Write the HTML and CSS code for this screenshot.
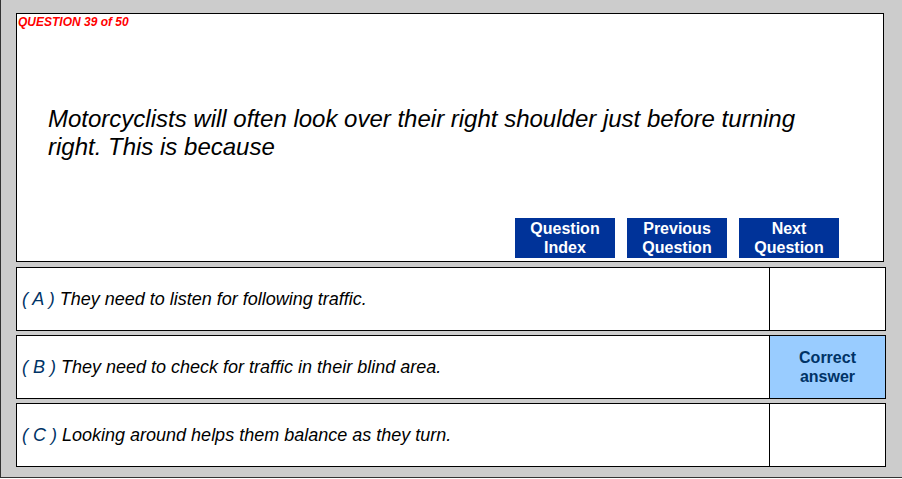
FILE: index.html
```html
<!DOCTYPE html>
<html lang="en">
<head>
  <meta charset="utf-8">
  <title>Question 39 of 50</title>
  <link rel="stylesheet" href="styles.css">
</head>
<body>
  <div class="frame">
    <div class="question">
      <div class="counter">QUESTION 39 of 50</div>
      <p class="prompt">Motorcyclists will often look over their right shoulder just before turning right. This is because</p>
      <div class="nav">
        <a class="btn" href="#">Question<br>Index</a>
        <a class="btn" href="#">Previous<br>Question</a>
        <a class="btn" href="#">Next<br>Question</a>
      </div>
    </div>
    <div class="answers">
      <div class="answer">
        <div class="choice"><span class="letter">( A )</span> They need to listen for following traffic.</div>
        <div class="mark"></div>
      </div>
      <div class="answer">
        <div class="choice"><span class="letter">( B )</span> They need to check for traffic in their blind area.</div>
        <div class="mark correct">Correct<br>answer</div>
      </div>
      <div class="answer">
        <div class="choice"><span class="letter">( C )</span> Looking around helps them balance as they turn.</div>
        <div class="mark"></div>
      </div>
    </div>
  </div>
</body>
</html>
```
FILE: styles.css
```css
body {
  margin: 0;
  background: #fff;
  font-family: "Liberation Sans", Arial, sans-serif;
}
.frame {
  width: 886px;
  height: 464px;
  background: #cccccc;
  border-left: 1px solid #333;
  border-bottom: 1px solid #333;
  padding: 13px 0 0 15px;
}
.question {
  width: 866px;
  height: 247px;
  background: #fff;
  border: 1px solid #000;
  display: flex;
  flex-direction: column;
}
.counter {
  color: #ff0000;
  font-size: 12px;
  font-weight: bold;
  font-style: italic;
  padding: 1px 0 0 1px;
  line-height: 14px;
}
.prompt {
  margin: 76px 0 0 31px;
  font-size: 24px;
  font-style: italic;
  line-height: 28px;
  width: 780px;
}
.nav {
  margin-top: auto;
  margin-bottom: 3px;
  display: flex;
  justify-content: flex-end;
  gap: 12px;
  padding-right: 44px;
}
.btn {
  width: 100px;
  height: 40px;
  background: #003399;
  color: #fff;
  text-decoration: none;
  font-weight: bold;
  font-size: 16px;
  line-height: 19px;
  text-align: center;
  display: flex;
  align-items: center;
  justify-content: center;
}
.answers {
  margin-top: 5px;
  display: flex;
  flex-direction: column;
  gap: 4px;
}
.answer {
  width: 868px;
  height: 62px;
  background: #fff;
  border: 1px solid #000;
  display: flex;
}
.choice {
  flex: 1;
  display: flex;
  align-items: center;
  padding-left: 5px;
  font-size: 18px;
  font-style: italic;
  white-space: pre;
}
.letter {
  color: #003366;
}
.mark {
  width: 115px;
  border-left: 1px solid #000;
  display: flex;
  align-items: center;
  justify-content: center;
  text-align: center;
}
.correct {
  background: #99ccff;
  color: #003366;
  font-weight: bold;
  font-size: 16px;
  line-height: 19px;
}
```
